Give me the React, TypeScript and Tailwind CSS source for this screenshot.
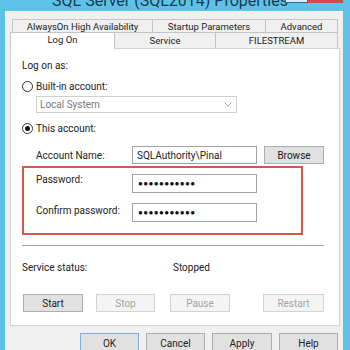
import React from "react";

const font = { fontFamily: 'Roboto, "Noto Sans", sans-serif' };

function Radio({ checked, label }: { checked?: boolean; label: string }) {
  return (
    <div className="flex h-[14px] items-center">
      <span className="flex h-[11px] w-[11px] items-center justify-center rounded-full border border-[#333] bg-white">
        {checked && <span className="h-[5px] w-[5px] rounded-full bg-[#111]" />}
      </span>
      <span className="ml-[3px]">{label}</span>
    </div>
  );
}

function Btn({ label, disabled, w = "w-[60px]" }: { label: string; disabled?: boolean; w?: string }) {
  const cls = disabled
    ? "border-[#d3d3d3] bg-[#f4f4f4] text-[#a3a3a3]"
    : "border-[#adadad] bg-[#e1e1e1] text-[#1a1a1a]";
  return (
    <div className={`flex h-[18px] items-center justify-center border ${cls} ${w}`}>
      {label}
    </div>
  );
}

function Dots() {
  return (
    <div className="flex h-[19px] w-[125px] items-center border border-[#9fa1a6] bg-white pl-[5px] text-[8px] leading-none tracking-[0.4px] text-[#111]">
      ●●●●●●●●●●●
    </div>
  );
}

export default function App() {
  return (
    <div className="flex h-[350px] w-[350px] flex-col overflow-hidden whitespace-nowrap bg-[#5cc3e6] pl-[5px] pr-[7px] text-[10px] text-[#222]" style={font}>
      {/* title bar */}
      <div className="relative h-[11px] shrink-0">
        <div className="flex h-[11px] items-end justify-center overflow-hidden pr-[8px]">
          <span className="mb-[2px] text-[16px] leading-[16px] text-[#1d3b50]">SQL Server (SQL2014) Properties</span>
        </div>
        <div className="absolute right-0 top-0 flex h-[3px]">
          <div className="w-[23px] border-x border-b border-[#2d6a8a] bg-[#d8eef8]" />
          <div className="w-[35px] bg-[#c9504a]" />
        </div>
      </div>

      {/* dialog body */}
      <div className="flex flex-1 flex-col border-t border-[#fafafa] bg-[#f0f0f0] pl-[5px]">
        {/* tabs row 1 */}
        <div className="ml-[2px] mt-[7px] flex h-[13px] w-[326px] text-center text-[9.5px] leading-[13px]">
          <div className="w-[140px] border-l border-t border-[#c4c4c4]">AlwaysOn High Availability</div>
          <div className="w-[113px] border-l border-t border-[#c4c4c4]">Startup Parameters</div>
          <div className="w-[73px] border-x border-t border-[#c4c4c4]">Advanced</div>
        </div>
        {/* tabs row 2 */}
        <div className="flex h-[16px] text-center text-[9.5px]">
          <div className="relative z-10 -mb-px w-[105px] border-x border-t border-[#c4c4c4] bg-white leading-[14px]">Log On</div>
          <div className="w-[101px] border-r border-t border-[#c4c4c4] leading-[16px]">Service</div>
          <div className="w-[122px] border-r border-t border-[#c4c4c4] leading-[16px]">FILESTREAM</div>
        </div>

        {/* panel */}
        <div className="flex h-[278px] w-[330px] flex-col border border-[#d3d3d3] bg-white pl-[11px] pt-[9px]">
          <div className="flex h-[14px] items-center">Log on as:</div>
          <div className="mt-[7px]">
            <Radio label="Built-in account:" />
          </div>
          <div className="ml-[14px] mt-[3px] flex h-[17px] w-[201px] items-center justify-between border border-[#cfcfcf] bg-white pl-[3px] pr-[4px] text-[#7a7a7a]">
            <span>Local System</span>
            <svg width="8" height="5" viewBox="0 0 8 5">
              <path d="M0.5 0.5 L4 4 L7.5 0.5" fill="none" stroke="#a8a8a8" strokeWidth="1" />
            </svg>
          </div>
          <div className="mt-[8px]">
            <Radio checked label="This account:" />
          </div>

          <div className="mt-[11px] flex h-[18px] items-center">
            <span className="ml-[14px] w-[96px]">Account Name:</span>
            <div className="flex h-[18px] w-[125px] items-center border border-[#9fa1a6] bg-white pl-[4px]">SQLAuthority\Pinal</div>
            <div className="ml-[7px]">
              <Btn label="Browse" />
            </div>
          </div>

          {/* highlighted password group */}
          <div className="mt-[2px] flex h-[69px] w-[281px] flex-col border-2 border-[#d9534f] pl-[12px] pt-[6px]">
            <div className="flex h-[19px]">
              <span className="w-[96px] leading-[12px]">Password:</span>
              <Dots />
            </div>
            <div className="mt-[10px] flex h-[19px]">
              <span className="w-[96px] pt-[1px] leading-[14px]">Confirm password:</span>
              <Dots />
            </div>
          </div>

          <div className="mt-[10px] h-px w-[302px] bg-[#a0a0a0]" />

          <div className="mt-[14px] flex h-[14px] items-center">
            <span className="w-[151px]">Service status:</span>
            <span>Stopped</span>
          </div>

          <div className="mt-[20px] flex">
            <div className="ml-px">
              <Btn label="Start" />
            </div>
            <div className="ml-[13px]">
              <Btn label="Stop" disabled w="w-[59px]" />
            </div>
            <div className="ml-[15px]">
              <Btn label="Pause" disabled />
            </div>
            <div className="ml-[33px]">
              <Btn label="Restart" disabled w="w-[61px]" />
            </div>
          </div>
        </div>

        {/* bottom buttons */}
        <div className="mt-[7px] flex justify-end gap-[7px] pr-[5px]">
          <div className="flex h-[20px] w-[59px] items-center justify-center border border-[#7eaedc] bg-[#e1e1e1]">OK</div>
          <div className="flex h-[20px] w-[59px] items-center justify-center border border-[#adadad] bg-[#e1e1e1]">Cancel</div>
          <div className="flex h-[20px] w-[60px] items-center justify-center border border-[#adadad] bg-[#e1e1e1]">Apply</div>
          <div className="flex h-[20px] w-[59px] items-center justify-center border border-[#adadad] bg-[#e1e1e1]">Help</div>
        </div>
      </div>
    </div>
  );
}
